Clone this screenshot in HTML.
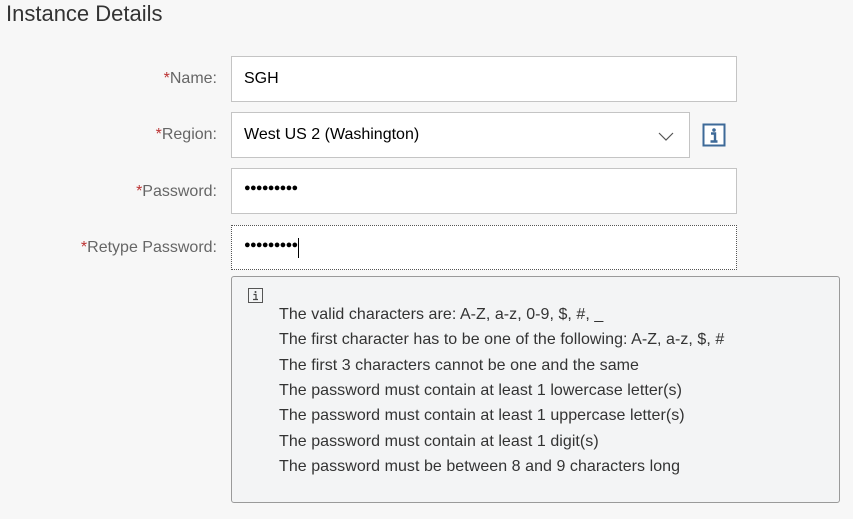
<!DOCTYPE html>
<html><head><style>
body{margin:0;width:853px;height:519px;background:#f7f7f7;font-family:"Liberation Sans",sans-serif;position:relative;overflow:hidden}
.t{position:absolute;left:6px;top:1px;font-size:22px;color:#333}
.l{position:absolute;right:636px;font-size:16px;color:#666;text-align:right;white-space:nowrap}
.l b{color:#b33;font-weight:normal}
.in{position:absolute;left:231px;width:504px;height:44px;background:#fff;border:1px solid #c4c4c4;font-size:16px;color:#000;box-sizing:content-box}
.in span{position:absolute;left:12px;top:13px}
.dots{position:absolute;left:15px;top:13px;font-size:11px;letter-spacing:-0.7px}
.h{position:absolute;left:231px;top:276px;width:607px;height:225px;background:#f3f4f5;border:1px solid #9a9a9a;border-radius:3px}
.h div{position:absolute;left:47px;font-size:16px;color:#333;white-space:nowrap;letter-spacing:0.05px}
</style></head><body>
<div class="t">Instance Details</div>
<div class="l" style="top:70px"><b>*</b>Name:</div>
<div class="l" style="top:126px"><b>*</b>Region:</div>
<div class="l" style="top:183px"><b>*</b>Password:</div>
<div class="l" style="top:239px"><b>*</b>Retype Password:</div>
<div class="in" style="top:56px"><span>SGH</span></div>
<div class="in" style="top:112px;width:457px"><span>West US 2 (Washington)</span>
<svg style="position:absolute;left:426px;top:19px" width="16" height="10"><path d="M1 1L8 8L15 1" fill="none" stroke="#555" stroke-width="1.2"/></svg></div>
<svg style="position:absolute;left:702px;top:123px" width="24" height="25"><rect x="1.5" y="1.5" width="21" height="21" fill="#fff" stroke="#3e6a98" stroke-width="2"/><circle cx="12" cy="7" r="1.8" fill="#3e6a98"/><path d="M9 10.5h4v7.5M8.5 18.5h7" fill="none" stroke="#3e6a98" stroke-width="2.4"/></svg>
<div class="in" style="top:168px"><span class="dots">●●●●●●●●●</span></div>
<div class="in" style="top:225px;height:43px;border:1px dotted #555"><span class="dots">●●●●●●●●●</span><span style="position:absolute;left:66px;top:12px;width:1px;height:20px;background:#000"></span></div>
<div class="h">
<svg style="position:absolute;left:16px;top:11px" width="15" height="15"><rect x="0.5" y="0.5" width="14" height="14" fill="none" stroke="#555"/><circle cx="7.5" cy="4" r="1" fill="#444"/><path d="M5.5 6.5h2.5v5M5 11.5h5" fill="none" stroke="#444" stroke-width="1.2"/></svg>
<div style="top:29px">The valid characters are: A-Z, a-z, 0-9, $, #, _</div>
<div style="top:54px">The first character has to be one of the following: A-Z, a-z, $, #</div>
<div style="top:80px">The first 3 characters cannot be one and the same</div>
<div style="top:105px">The password must contain at least 1 lowercase letter(s)</div>
<div style="top:130px">The password must contain at least 1 uppercase letter(s)</div>
<div style="top:156px">The password must contain at least 1 digit(s)</div>
<div style="top:181px">The password must be between 8 and 9 characters long</div>
</div>
</body></html>
